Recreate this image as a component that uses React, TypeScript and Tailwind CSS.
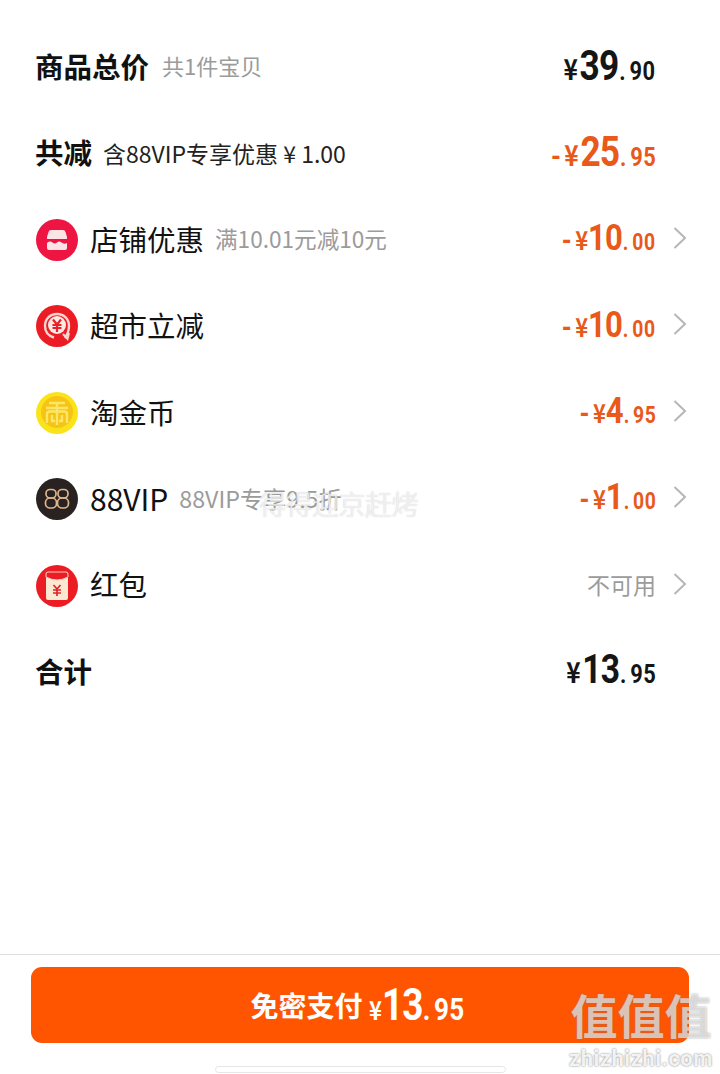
import type { ReactNode } from "react";

const cjk = "font-['Noto_Sans_CJK_SC','Noto_Sans',sans-serif]";
const num = "font-['Roboto','Noto_Sans_CJK_SC',sans-serif]";

function StoreIcon() {
  return (
    <svg viewBox="0 0 42 42" className="w-[42px] h-[42px]">
      <circle cx="21" cy="21" r="21" fill="#ee1543" />
      <path d="M11 18 L12.5 13 Q13 11 15 11 L27 11 Q29 11 29.5 13 L31 18 L31 20 L11 20 Z" fill="#fbe3e6" />
      <path d="M11 24 Q14 21.5 16.5 23.5 T21 23.5 T25.5 23.5 T31 24 L31 29 Q31 31 29 31 L13 31 Q11 31 11 29 Z" fill="#fbe3e6" />
    </svg>
  );
}

function SaveIcon() {
  return (
    <svg viewBox="0 0 42 42" className="w-[42px] h-[42px]">
      <circle cx="21" cy="21" r="21" fill="#ec1c24" />
      <path d="M29 33 C31 30 33 26 33 21 C33 14 28 9 21 9 C14 9 9 14 9 21 C9 27 13 31 18 32.5" fill="none" stroke="#fbd5cf" strokeWidth="2.4" />
      <path d="M27 29 L31.5 34 L33 28" fill="none" stroke="#fbd5cf" strokeWidth="2" />
      <circle cx="21" cy="20" r="9" fill="#fde8e2" />
      <path d="M17 14.5 L21 19.5 L25 14.5 M16.5 20 H25.5 M16.5 23 H25.5 M21 19.5 V27" fill="none" stroke="#e8222a" strokeWidth="2.2" />
    </svg>
  );
}

function CoinIcon() {
  return (
    <svg viewBox="0 0 42 42" className="w-[42px] h-[42px]">
      <circle cx="21" cy="21" r="21" fill="#fbe31a" />
      <circle cx="21" cy="20" r="16" fill="#f6c414" />
      <path d="M13 11 H29 M21 11 V16 M10 16 H32 M11 31 V22 Q11 19.5 14 19.5 H28 Q31 19.5 31 22 V31" fill="none" stroke="#fbe66a" strokeWidth="2.4" />
      <path d="M21 17 V33 M16 23 V29 H19 M26 23 V29 H23" fill="none" stroke="#fbe66a" strokeWidth="2.4" />
    </svg>
  );
}

function VipIcon() {
  return (
    <svg viewBox="0 0 42 42" className="w-[42px] h-[42px]">
      <circle cx="21" cy="21" r="21" fill="#2a2220" />
      <g fill="none" stroke="#ddb58e" strokeWidth="1.7">
        <rect x="10" y="11.5" width="10" height="8.5" rx="4" />
        <rect x="9.5" y="20" width="11" height="10" rx="4.6" />
        <rect x="22" y="11.5" width="10" height="8.5" rx="4" />
        <rect x="21.5" y="20" width="11" height="10" rx="4.6" />
      </g>
    </svg>
  );
}

function RedPacketIcon() {
  return (
    <svg viewBox="0 0 42 42" className="w-[42px] h-[42px]">
      <circle cx="21" cy="21" r="21" fill="#ec1c24" />
      <rect x="10" y="7" width="22" height="28" rx="2" fill="#fbe8d2" />
      <path d="M10 9 Q10 7 12 7 H30 Q32 7 32 9 V12 Q21 18 10 12 Z" fill="#ec1c24" stroke="#fbd0bd" strokeWidth="1" />
      <path d="M17.5 20 L21 24 L24.5 20 M17 25 H25 M17 28 H25 M21 24 V31" fill="none" stroke="#e0242a" strokeWidth="1.7" />
    </svg>
  );
}

function Arrow() {
  return (
    <svg viewBox="0 0 14 24" className="w-[14px] h-[24px]">
      <path d="M1.5 2 L12 12 L1.5 22" fill="none" stroke="#b6b6b6" strokeWidth="2" />
    </svg>
  );
}

type PriceProps = {
  minus?: boolean;
  yuan: string;
  cents: string;
  color: string;
  big?: string;
  large?: boolean;
};

// the app's digits are a condensed DIN, so the whole amount gets squeezed from the right edge
function Price({ minus, yuan, cents, color, big = "text-[37px]", large }: PriceProps) {
  return (
    <div className={`flex items-baseline font-bold origin-right scale-x-[0.84] -translate-y-[2px] ${num} ${color}`}>
      {minus && <span className="text-[30px] mr-[4px]">-</span>}
      <span className={`${large ? "text-[29px] mr-[2px]" : "text-[26px]"} ${cjk}`}>¥</span>
      <span className={`${big} tracking-[-1px]`}>{yuan}</span>
      <span className={`${large ? "text-[26px]" : "text-[23px]"} ml-px tracking-[0.6px]`}>
        <span className="mr-[4px]">.</span>
        {cents}
      </span>
    </div>
  );
}

function Row({
  icon,
  left,
  right,
  arrow,
}: {
  icon?: ReactNode;
  left: ReactNode;
  right: ReactNode;
  arrow?: boolean;
}) {
  return (
    <div className="h-[86.4px] flex items-center">
      {icon ? <div className="w-[54px] shrink-0">{icon}</div> : <div className="-ml-px" />}
      <div className="flex-1 flex items-center min-w-0 -translate-y-px">{left}</div>
      {right}
      <div className="w-[31px] flex justify-end -translate-y-[2px]">{arrow && <Arrow />}</div>
    </div>
  );
}

const title = "text-[28.5px] text-[#111111] leading-none";
const hint = "text-[22.6px] text-[#9b9b9b] leading-none";
const orange = "text-[#e8591a]";

export default function App() {
  return (
    <div className={`relative h-[1074px] w-[720px] bg-white flex flex-col overflow-hidden ${cjk}`}>
      <div className="flex-1 pt-[24px] pl-[36px] pr-[33px]">
        <Row
          left={
            <>
              <span className={`${title} font-bold`}>商品总价</span>
              <span className="text-[22px] text-[#9b9b9b] leading-none ml-[13px] -translate-y-px">共1件宝贝</span>
            </>
          }
          right={<Price yuan="39" cents="90" color="text-[#151515]" big="text-[42px]" large />}
        />
        <Row
          left={
            <>
              <span className={`${title} font-bold`}>共减</span>
              <span className="text-[23px] text-[#222222] leading-none ml-[11px] translate-y-px">含88VIP专享优惠 ¥ 1.00</span>
            </>
          }
          right={<Price minus yuan="25" cents="95" color={orange} big="text-[42px]" large />}
        />
        <Row
          icon={<StoreIcon />}
          left={
            <>
              <span className={title}>店铺优惠</span>
              <span className={`${hint} ml-[11px]`}>满10.01元减10元</span>
            </>
          }
          right={<Price minus yuan="10" cents="00" color={orange} />}
          arrow
        />
        <Row
          icon={<SaveIcon />}
          left={<span className={title}>超市立减</span>}
          right={<Price minus yuan="10" cents="00" color={orange} />}
          arrow
        />
        <Row
          icon={<CoinIcon />}
          left={<span className={title}>淘金币</span>}
          right={<Price minus yuan="4" cents="95" color={orange} />}
          arrow
        />
        <Row
          icon={<VipIcon />}
          left={
            <>
              <span className="text-[30px] text-[#111111] leading-none">88VIP</span>
              <span className="text-[23.2px] text-[#9b9b9b] leading-none ml-[11px]">88VIP专享9.5折</span>
            </>
          }
          right={<Price minus yuan="1" cents="00" color={orange} />}
          arrow
        />
        <Row
          icon={<RedPacketIcon />}
          left={<span className={title}>红包</span>}
          right={<span className="text-[23px] text-[#9b9b9b] leading-none -translate-y-px">不可用</span>}
          arrow
        />
        <Row
          left={<span className={`${title} font-bold`}>合计</span>}
          right={<Price yuan="13" cents="95" color="text-[#151515]" big="text-[40px]" large />}
        />
      </div>

      <div className="h-[120px] border-t border-[#e0e0e0] px-[31px] pt-[12px]">
        <div className="h-[76px] rounded-[11px] bg-[#ff5500] flex items-center justify-center text-white">
          <span className="text-[28px] font-bold mr-[6px]">免密支付</span>
          <div className={`flex items-baseline font-bold origin-left scale-x-[0.84] -mr-[13px] ${num}`}>
            <span className={`text-[26px] ${cjk}`}>¥</span>
            <span className="text-[44px] tracking-[-1px]">13</span>
            <span className="text-[31px] tracking-[0.5px]">
              <span className="mr-[4px]">.</span>95
            </span>
          </div>
        </div>
        <div className="mx-auto mt-[23px] w-[291px] h-[7px] rounded-full bg-white border border-[#e6e6e6]" />
      </div>

      {/* watermarks over the screenshot */}
      <div className="absolute left-[259px] top-[490px] text-[27px] leading-none text-white/70 tracking-[-0.5px] [text-shadow:0_0_1px_rgba(150,150,150,0.5)]">
        得得迎京赶烤
      </div>
      <div className="absolute left-[569px] top-[990px] flex flex-col items-center">
        <div className="text-[47px] leading-none font-bold text-white/60 [text-shadow:0_0_2px_rgba(120,120,120,0.7)]">
          值值值
        </div>
        <div className="text-[22px] leading-none mt-[11px] text-white/90 font-bold tracking-[0.5px] font-['Roboto',sans-serif] [text-shadow:0_0_2px_rgba(90,90,90,0.9)]">
          zhizhizhi.com
        </div>
      </div>
    </div>
  );
}
